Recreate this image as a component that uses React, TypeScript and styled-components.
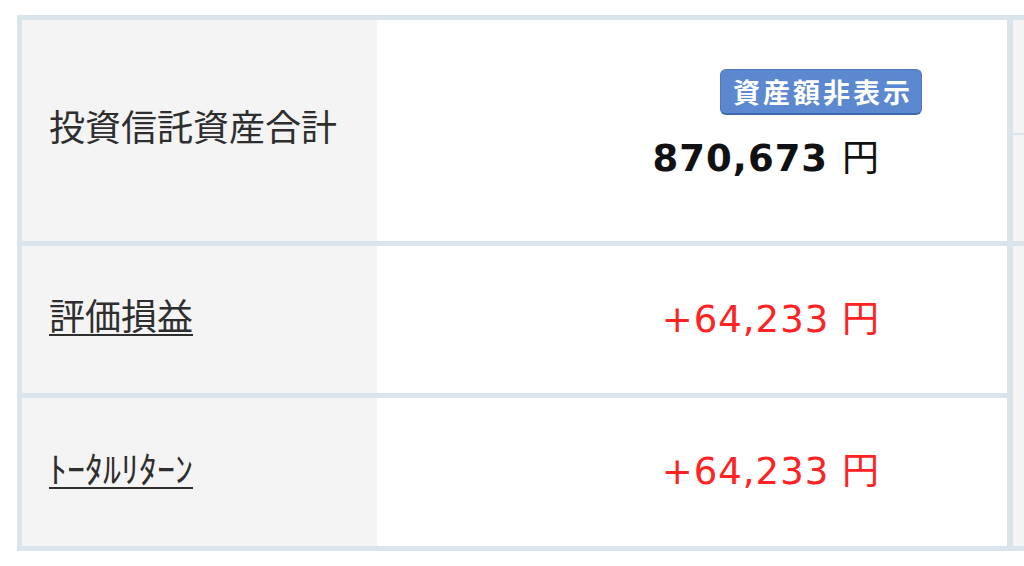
import React from "react";
import styled, { createGlobalStyle } from "styled-components";

const BORDER = "#dbe4ea";

const GlobalStyle = createGlobalStyle`
  html, body {
    margin: 0;
    padding: 0;
    background: #ffffff;
    overflow: hidden;
  }
  body {
    font-family: "Noto Sans CJK JP", "Noto Sans", sans-serif;
  }
`;

const Page = styled.div`
  display: flex;
  align-items: flex-start;
  width: 1024px;
  padding: 15px 0 0 17px;
  box-sizing: border-box;
  overflow: hidden;
`;

const Table = styled.div`
  flex-shrink: 0;
  width: 996px;
  box-sizing: border-box;
  border: 5px solid ${BORDER};
  border-right-width: 6px;
  display: flex;
  flex-direction: column;
`;

const Row = styled.div<{ $h: number }>`
  display: grid;
  grid-template-columns: 355px 1fr;
  height: ${(p) => p.$h}px;
  &:not(:last-child) {
    border-bottom: 5px solid ${BORDER};
  }
`;

const LabelCell = styled.div`
  background: #f4f4f4;
  display: flex;
  align-items: center;
  padding-left: 27px;
  padding-bottom: 9px;
  font-family: "Noto Sans CJK JP", sans-serif;
  font-size: 36px;
  color: #2e2e2e;
  line-height: 1.2;
`;

const LabelLink = styled.a`
  color: inherit;
  text-decoration: underline;
  text-decoration-thickness: 2px;
  text-underline-offset: 4px;
  cursor: pointer;
`;

const ValueCell = styled.div<{ $pr: number }>`
  background: #ffffff;
  display: flex;
  flex-direction: column;
  align-items: flex-end;
  justify-content: center;
  padding-right: ${(p) => p.$pr}px;
`;

const Badge = styled.span`
  display: inline-flex;
  align-items: center;
  height: 46px;
  box-sizing: border-box;
  padding: 0 8px 0 12px;
  margin-top: -8px;
  background: #5b88cf;
  border: 1px solid #4d79c0;
  border-bottom: 2px solid #3f68ad;
  border-radius: 6px;
  color: #ffffff;
  font-family: "Noto Sans CJK JP", sans-serif;
  font-weight: 700;
  font-size: 27px;
  letter-spacing: 3px;
  line-height: 1;
`;

const Amount = styled.div<{ $color: string; $bold?: boolean; $mr?: number; $mt?: number }>`
  font-family: "DejaVu Sans", "Noto Sans CJK JP", sans-serif;
  font-size: 37px;
  line-height: 44px;
  letter-spacing: 1px;
  white-space: nowrap;
  color: ${(p) => p.$color};
  font-weight: ${(p) => (p.$bold ? 700 : 400)};
  margin-right: ${(p) => p.$mr ?? 0}px;
  margin-top: ${(p) => p.$mt ?? 0}px;
  margin-bottom: 4px;
`;

const Yen = styled.span`
  font-family: "Noto Sans CJK JP", sans-serif;
  font-weight: 400;
  letter-spacing: 0;
`;

const Side = styled.div`
  flex: 1;
  min-width: 11px;
  height: 536px;
  box-sizing: border-box;
  border-top: 5px solid ${BORDER};
  border-bottom: 5px solid ${BORDER};
  background: #f4f4f4;
  display: flex;
  flex-direction: column;
`;

const SideCell = styled.div<{ $h: number; $b: number }>`
  height: ${(p) => p.$h}px;
  border-bottom: ${(p) => p.$b}px solid ${BORDER};
`;

export default function App() {
  return (
    <>
      <GlobalStyle />
      <Page>
        <Table>
          <Row $h={221}>
            <LabelCell>投資信託資産合計</LabelCell>
            <ValueCell $pr={85}>
              <Badge>資産額非表示</Badge>
              <Amount $color="#111111" $bold $mr={43} $mt={18}>
                870,673 <Yen>円</Yen>
              </Amount>
            </ValueCell>
          </Row>
          <Row $h={147}>
            <LabelCell>
              <LabelLink>評価損益</LabelLink>
            </LabelCell>
            <ValueCell $pr={128}>
              <Amount $color="#ff2222">
                +64,233 <Yen>円</Yen>
              </Amount>
            </ValueCell>
          </Row>
          <Row $h={148}>
            <LabelCell>
              <LabelLink>ﾄｰﾀﾙﾘﾀｰﾝ</LabelLink>
            </LabelCell>
            <ValueCell $pr={128}>
              <Amount $color="#ff2222">
                +64,233 <Yen>円</Yen>
              </Amount>
            </ValueCell>
          </Row>
        </Table>
        <Side>
          <SideCell $h={113} $b={2} />
          <SideCell $h={106} $b={5} />
        </Side>
      </Page>
    </>
  );
}
